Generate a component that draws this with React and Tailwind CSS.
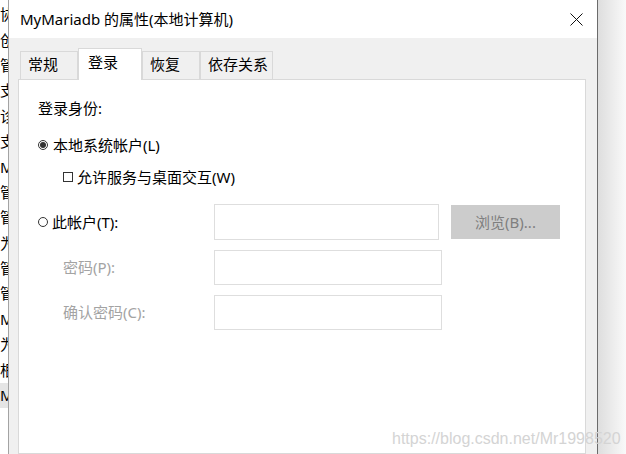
const sideChars = ['协', '创', '管', '支', '诊', '支', 'M', '管', '管', '为', '管', '管', 'M', '为', '根', 'M'];

const tabs = [
  { label: '常规', w: 'w-[58px]' },
  { label: '登录', w: 'w-[64px]', active: true },
  { label: '恢复', w: 'w-[58px]' },
  { label: '依存关系', w: 'w-[73px]' },
];

const Radio = ({ checked }) => (
  <span className="flex h-[10px] w-[10px] shrink-0 items-center justify-center rounded-full border border-[#333]">
    {checked && <span className="h-[6px] w-[6px] rounded-full bg-[#333]"></span>}
  </span>
);

const App = () => {
  return (
    <div
      className="relative flex h-[454px] w-[626px] overflow-hidden bg-white text-black"
      style={{ fontFamily: '"Noto Sans", "Noto Sans CJK SC", sans-serif' }}
    >
      {/* window behind the dialog */}
      <div className="w-[8px] shrink-0 overflow-hidden pt-[2px]">
        {sideChars.map((c, i) => (
          <div
            key={i}
            className={`flex h-[25.4px] items-center whitespace-nowrap text-[15px] leading-none ${
              i === sideChars.length - 1 ? 'bg-[#e5e5e5]' : ''
            }`}
          >
            {c}
          </div>
        ))}
      </div>

      {/* dialog */}
      <div className="flex w-[590px] shrink-0 flex-col border-l border-r border-l-[#a3a3a3] border-r-[#6b6b6b]">
        <div className="flex h-[38px] items-center justify-between bg-white pl-[11px] pr-[14px]">
          <span className="text-[15px]">MyMariadb 的属性(本地计算机)</span>
          <svg width="13" height="13" viewBox="0 0 13 13" className="mt-[1px]">
            <path d="M0.5 0.5L12.5 12.5M12.5 0.5L0.5 12.5" stroke="#111" strokeWidth="1" />
          </svg>
        </div>

        <div className="flex flex-1 flex-col bg-[#f0f0f0] pl-[9px] pr-[11px] pt-[10px]">
          <div className="relative z-10 flex h-[31px] items-end pl-[2px]">
            {tabs.map((t) =>
              t.active ? (
                <div
                  key={t.label}
                  className={`${t.w} mb-[-1px] h-[32px] border border-b-0 border-[#d9d9d9] bg-white pl-[9px] pt-[2px] text-[15px]`}
                >
                  {t.label}
                </div>
              ) : (
                <div
                  key={t.label}
                  className={`${t.w} h-[28px] border border-b-0 border-[#d9d9d9] bg-[#f0f0f0] pl-[7px] pt-[1px] text-[15px]`}
                >
                  {t.label}
                </div>
              )
            )}
          </div>

          <div className="flex-1 border border-[#d9d9d9] bg-white pl-[19px] pt-[18px] text-[15px]">
            <div className="flex h-[20px] items-center">登录身份:</div>

            <div className="mt-[17px] flex h-[20px] items-center gap-[5px]">
              <Radio checked />
              <span>本地系统帐户(L)</span>
            </div>

            <div className="mt-[12px] flex h-[20px] items-center gap-[4px] pl-[25px]">
              <span className="h-[10px] w-[10px] shrink-0 border border-[#333]"></span>
              <span>允许服务与桌面交互(W)</span>
            </div>

            <div className="mt-[17px] flex h-[36px] items-center">
              <div className="flex w-[176px] items-center gap-[4px]">
                <Radio />
                <span>此帐户(T):</span>
              </div>
              <div className="h-[36px] w-[225px] border border-[#dedede] bg-white"></div>
              <div className="ml-[12px] flex h-[34px] w-[109px] items-center justify-center bg-[#cccccc] text-[#7f7f7f]">
                浏览(B)...
              </div>
            </div>

            <div className="mt-[10px] flex h-[35px] items-center">
              <div className="w-[176px] pl-[25px] text-[#a3a3a3]">密码(P):</div>
              <div className="h-[35px] w-[228px] border border-[#dedede] bg-white"></div>
            </div>

            <div className="mt-[10px] flex h-[35px] items-center">
              <div className="w-[176px] pl-[25px] text-[#a3a3a3]">确认密码(C):</div>
              <div className="h-[35px] w-[228px] border border-[#dedede] bg-white"></div>
            </div>
          </div>
        </div>
      </div>

      {/* drop shadow */}
      <div className="flex-1 bg-gradient-to-r from-[#dedede] to-[#f9f9f9]"></div>

      {/* watermark */}
      <div
        className="absolute left-[392px] top-[427px] text-[16px] text-[#d4d4d4]"
        style={{ fontFamily: '"Liberation Sans", Arial, sans-serif' }}
      >
        https://blog.csdn.net/Mr1998520
      </div>
    </div>
  );
};

export default App;
